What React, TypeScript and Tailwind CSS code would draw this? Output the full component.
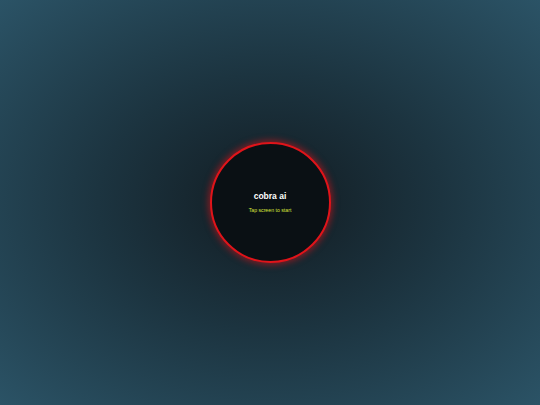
export default function App() {
  return (
    <div className="w-full h-screen flex items-center justify-center bg-[radial-gradient(ellipse_at_center,#121c22_0%,#1c3440_45%,#2b5366_100%)] font-['Liberation_Sans',Arial,sans-serif]">
      <div className="w-[121px] h-[121px] rounded-full bg-[#0a1014] border-2 border-[#e0141a] shadow-[0_0_6px_2px_rgba(230,20,25,0.5)] flex flex-col items-center justify-center">
        <div className="text-white font-bold text-[8.5px] leading-none mt-0">cobra ai</div>
        <div className="text-[#dbe53c] text-[5.2px] leading-none mt-[7px]">Tap screen to start</div>
      </div>
    </div>
  );
}
